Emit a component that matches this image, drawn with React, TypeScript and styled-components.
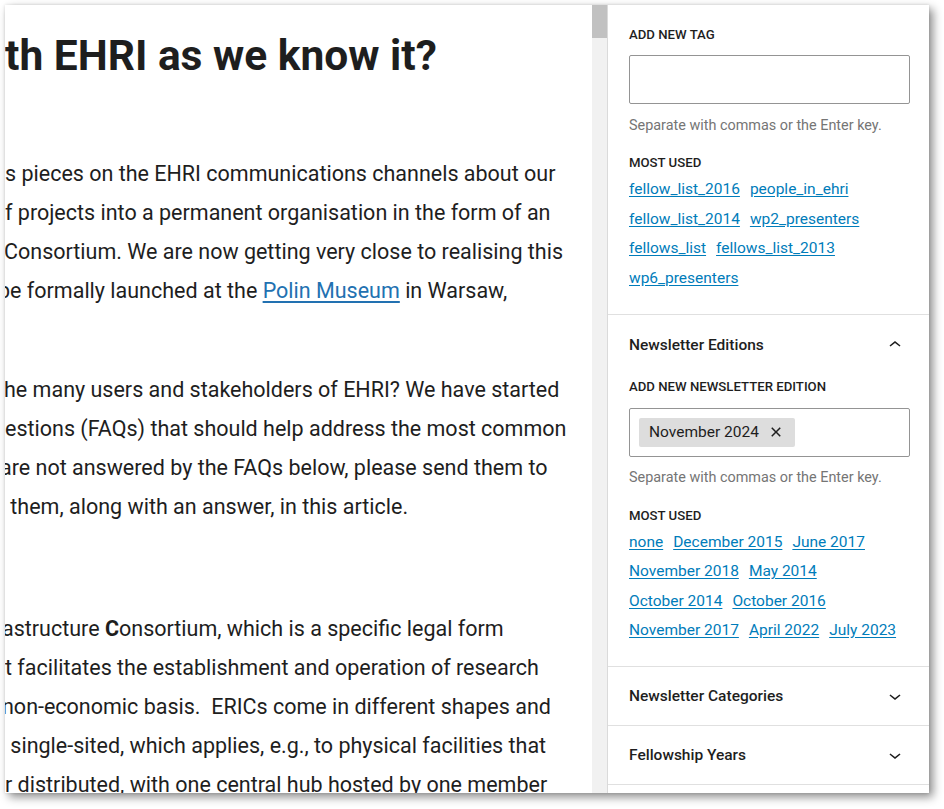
import React from "react";
import styled, { createGlobalStyle } from "styled-components";

const Global = createGlobalStyle`
  html, body { margin: 0; padding: 0; background: #ffffff; }
  body { font-family: Roboto, "Noto Sans", Arial, sans-serif; color: #1e1e1e; }
  * { box-sizing: border-box; }
`;

const Stage = styled.div`
  width: 944px;
  height: 809px;
  padding: 5px 0 0 5px;
`;

const Window = styled.div`
  width: 924px;
  height: 788px;
  display: flex;
  background: #fff;
  overflow: hidden;
  box-shadow: 4px 4px 9px rgba(0, 0, 0, 0.45), 0 0 3px rgba(0, 0, 0, 0.12);
`;

const Editor = styled.div`
  width: 587px;
  flex: none;
  overflow: hidden;
  padding-top: 24px;
`;

const Title = styled.h1`
  margin: 0;
  font-size: 42.5px;
  line-height: 53px;
  font-weight: 700;
  white-space: nowrap;
  color: #1e1e1e;
`;

const Para = styled.div<{ $space: number }>`
  margin-top: ${(p) => p.$space}px;
`;

const Line = styled.div<{ $shift?: number }>`
  font-size: 21.5px;
  line-height: 39px;
  white-space: pre;
  color: #1e1e1e;
  margin-left: ${(p) => p.$shift ?? 0}px;
`;

const BodyLink = styled.a`
  color: #2271b1;
  text-decoration: underline;
  text-underline-offset: 3px;
`;

const Scrollbar = styled.div`
  width: 15px;
  flex: none;
  background: #f1f1f1;
  display: flex;
  flex-direction: column;
`;

const Thumb = styled.div`
  height: 33px;
  background: #c1c1c1;
`;

const Sidebar = styled.div`
  width: 322px;
  flex: none;
  border-left: 1px solid #dadada;
  display: flex;
  flex-direction: column;
`;

const Panel = styled.div<{ $top?: number }>`
  border-bottom: 1px solid #e0e0e0;
  padding: ${(p) => p.$top ?? 0}px 19px 26px 21px;
`;

const PanelClosed = styled.div`
  border-bottom: 1px solid #e0e0e0;
  padding: 0 19px 0 21px;
`;

const PanelHeader = styled.div<{ $h?: number; $pt?: number }>`
  height: ${(p) => p.$h ?? 58}px;
  padding-top: ${(p) => p.$pt ?? 0}px;
  display: flex;
  align-items: center;
  justify-content: space-between;
  font-size: 15.5px;
  font-weight: 500;
  color: #1e1e1e;
`;

const Chevron = styled.svg`
  width: 24px;
  height: 24px;
  margin-right: 3px;
  fill: #1e1e1e;
`;

const Label = styled.div<{ $top?: number }>`
  font-size: 13.2px;
  line-height: 16px;
  font-weight: 500;
  text-transform: uppercase;
  color: #1e1e1e;
  margin-top: ${(p) => p.$top ?? 0}px;
`;

const TokenInput = styled.div<{ $top?: number }>`
  margin-top: ${(p) => p.$top ?? 13}px;
  height: 49px;
  border: 1px solid #949494;
  border-radius: 2px;
  padding: 9px;
  display: flex;
  align-items: center;
`;

const Chip = styled.span`
  display: inline-flex;
  align-items: center;
  height: 29px;
  background: #dddddd;
  border-radius: 2px;
  padding: 0 7px 0 10px;
  font-size: 15.5px;
  color: #1e1e1e;
  gap: 5px;
`;

const CloseIcon = styled.svg`
  width: 24px;
  height: 24px;
  fill: #1e1e1e;
`;

const Help = styled.div<{ $top?: number }>`
  margin-top: ${(p) => p.$top ?? 13}px;
  font-size: 14.4px;
  line-height: 16px;
  color: #757575;
`;

const Links = styled.div`
  margin-top: 8px;
  display: flex;
  flex-wrap: wrap;
  column-gap: 10px;
  row-gap: 9.5px;
`;

const TagLink = styled.a`
  font-size: 15.5px;
  line-height: 20px;
  color: #007cba;
  text-decoration: underline;
  text-underline-offset: 2px;
`;

const ChevronUp = () => (
  <Chevron viewBox="0 0 24 24">
    <path d="M6.5 12.4L12 8l5.5 4.4-.9 1.2L12 10l-4.5 3.6-1-1.2z" />
  </Chevron>
);

const ChevronDown = () => (
  <Chevron viewBox="0 0 24 24">
    <path d="M17.5 11.6L12 16l-5.5-4.4.9-1.2L12 14l4.5-3.6 1 1.2z" />
  </Chevron>
);

const tags = [
  "fellow_list_2016",
  "people_in_ehri",
  "fellow_list_2014",
  "wp2_presenters",
  "fellows_list",
  "fellows_list_2013",
  "wp6_presenters",
];

const editions = [
  "none",
  "December 2015",
  "June 2017",
  "November 2018",
  "May 2014",
  "October 2014",
  "October 2016",
  "November 2017",
  "April 2022",
  "July 2023",
];

export default function App() {
  return (
    <Stage>
      <Global />
      <Window>
        <Editor>
          <Title>th EHRI as we know it?</Title>
          <Para $space={72}>
            <Line>s pieces on the EHRI communications channels about our</Line>
            <Line>f projects into a permanent organisation in the form of an</Line>
            <Line $shift={-1}>Consortium. We are now getting very close to realising this</Line>
            <Line $shift={-7}>
              be formally launched at the <BodyLink>Polin Museum</BodyLink> in Warsaw,
            </Line>
          </Para>
          <Para $space={60}>
            <Line $shift={-1}>he many users and stakeholders of EHRI? We have started</Line>
            <Line>estions (FAQs) that should help address the most common</Line>
            <Line $shift={-5}>are not answered by the FAQs below, please send them to</Line>
            <Line> them, along with an answer, in this article.</Line>
          </Para>
          <Para $space={83}>
            <Line $shift={-3}>
              astructure <b>C</b>onsortium, which is a specific legal form
            </Line>
            <Line>t facilitates the establishment and operation of research</Line>
            <Line $shift={-3}>non-economic basis.  ERICs come in different shapes and</Line>
            <Line> single-sited, which applies, e.g., to physical facilities that</Line>
            <Line>r distributed, with one central hub hosted by one member</Line>
          </Para>
        </Editor>
        <Scrollbar>
          <Thumb />
        </Scrollbar>
        <Sidebar>
          <Panel $top={22}>
            <Label>Add new tag</Label>
            <TokenInput $top={12} />
            <Help $top={14}>Separate with commas or the Enter key.</Help>
            <Label $top={21}>Most used</Label>
            <Links>
              {tags.map((t) => (
                <TagLink key={t}>{t}</TagLink>
              ))}
            </Links>
          </Panel>
          <Panel>
            <PanelHeader $h={59} $pt={2}>
              Newsletter Editions
              <ChevronUp />
            </PanelHeader>
            <Label $top={5}>Add new newsletter edition</Label>
            <TokenInput>
              <Chip>
                November 2024
                <CloseIcon viewBox="0 0 24 24">
                  <path d="M12 13.06l3.712 3.713 1.061-1.06L13.061 12l3.712-3.712-1.06-1.06L12 10.938 8.288 7.227l-1.061 1.06L10.939 12l-3.712 3.712 1.06 1.061L12 13.061z" />
                </CloseIcon>
              </Chip>
            </TokenInput>
            <Help>Separate with commas or the Enter key.</Help>
            <Label $top={22}>Most used</Label>
            <Links>
              {editions.map((t) => (
                <TagLink key={t}>{t}</TagLink>
              ))}
            </Links>
          </Panel>
          <PanelClosed>
            <PanelHeader>
              Newsletter Categories
              <ChevronDown />
            </PanelHeader>
          </PanelClosed>
          <PanelClosed>
            <PanelHeader>
              Fellowship Years
              <ChevronDown />
            </PanelHeader>
          </PanelClosed>
          <PanelClosed>
            <PanelHeader>Fellowship Categories</PanelHeader>
          </PanelClosed>
        </Sidebar>
      </Window>
    </Stage>
  );
}
